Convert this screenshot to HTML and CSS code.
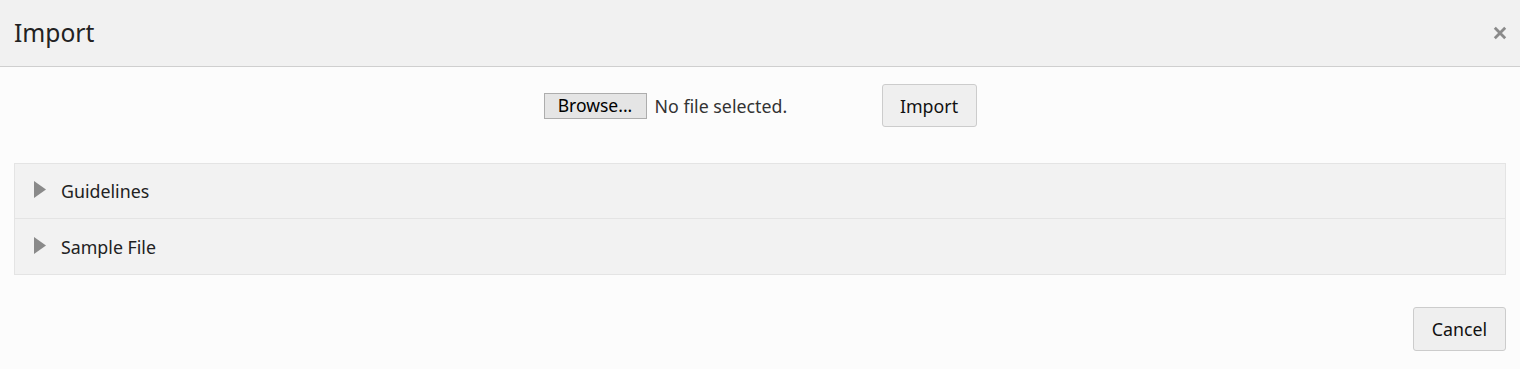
FILE: index.html
```html
<!DOCTYPE html>
<html>
<head>
<meta charset="utf-8">
<link rel="stylesheet" href="styles.css">
</head>
<body>
<div class="dialog">
  <div class="header">
    <h1 class="title">Import</h1>
    <span class="close" aria-label="Close">
      <svg width="14" height="14" viewBox="0 0 14 14"><path d="M1.8 1.8L12.2 12.2M12.2 1.8L1.8 12.2" stroke="#8a8a8a" stroke-width="2.8" fill="none"/></svg>
    </span>
  </div>
  <div class="body">
    <div class="upload">
      <div class="file">
        <button class="browse">Browse...</button>
        <span class="file-name">No file selected.</span>
      </div>
      <button class="btn">Import</button>
    </div>
    <div class="accordion">
      <div class="acc-row">
        <svg class="tri" width="12" height="17" viewBox="0 0 12 17"><path d="M0 0L12 8.5L0 17Z" fill="#8a8a8a"/></svg>
        <span>Guidelines</span>
      </div>
      <div class="acc-row">
        <svg class="tri" width="12" height="17" viewBox="0 0 12 17"><path d="M0 0L12 8.5L0 17Z" fill="#8a8a8a"/></svg>
        <span>Sample File</span>
      </div>
    </div>
    <div class="footer">
      <button class="btn cancel">Cancel</button>
    </div>
  </div>
</div>
</body>
</html>
```
FILE: styles.css
```css
html, body {
  margin: 0;
  padding: 0;
  background: #fcfcfc;
  font-family: "Noto Sans", "Open Sans", sans-serif;
  color: #222;
}
.dialog {
  width: 1520px;
  height: 369px;
  display: flex;
  flex-direction: column;
}
.header {
  height: 66px;
  background: #f1f1f1;
  border-bottom: 1px solid #cfcfcf;
  display: flex;
  align-items: center;
  justify-content: space-between;
  padding: 0 13px 0 14px;
  box-sizing: content-box;
}
.title {
  margin: 0;
  font-size: 24.6px;
  font-weight: 400;
  color: #222;
  line-height: 1;
}
.close {
  display: flex;
}
.body {
  flex: 1;
  padding: 17px 14px 0;
}
.upload {
  display: flex;
  justify-content: center;
  align-items: center;
  height: 43px;
}
.file {
  display: flex;
  align-items: center;
  width: 338px;
}
.browse {
  font-family: inherit;
  font-size: 17.5px;
  color: #000;
  background: #e5e5e5;
  border: 1px solid #adadad;
  border-radius: 0;
  height: 26px;
  width: 103px;
  padding: 0;
  line-height: 1;
}
.file-name {
  margin-left: 8px;
  font-size: 17.8px;
  color: #333;
}
.btn {
  font-family: inherit;
  font-size: 17.8px;
  color: #111;
  background: #efefef;
  border: 1px solid #cccccc;
  border-radius: 3px;
  height: 43px;
  width: 95px;
  padding: 0;
}
.accordion {
  margin-top: 36px;
  border: 1px solid #e4e4e4;
  background: #f2f2f2;
}
.acc-row {
  height: 55px;
  display: flex;
  align-items: center;
  padding-left: 19px;
  font-size: 17.8px;
  color: #222;
}
.acc-row:first-child {
  height: 54px;
}
.acc-row + .acc-row {
  border-top: 1px solid #e4e4e4;
}
.tri {
  margin-right: 15px;
  margin-top: -3px;
}
.footer {
  display: flex;
  justify-content: flex-end;
  margin-top: 32px;
}
.cancel {
  width: 93px;
  height: 44px;
}
```
